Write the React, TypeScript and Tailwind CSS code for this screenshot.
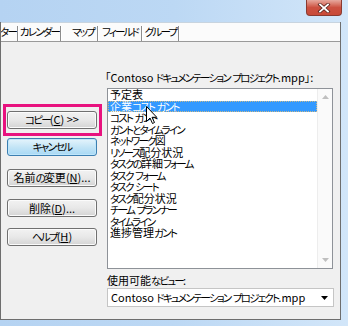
import React from "react";

const items = [
  "予定表",
  "企業コスト ガント",
  "コスト ガント",
  "ガントとタイムライン",
  "ネットワーク図",
  "リソース配分状況",
  "タスクの詳細フォーム",
  "タスク フォーム",
  "タスク シート",
  "タスク配分状況",
  "チーム プランナー",
  "タイムライン",
  "進捗管理ガント",
];

// Wraps kana runs in a tighter span (Meiryo UI kana are narrow)
function J({ t }: { t: string }) {
  const parts = t.split(/([\u3040-\u30ff]+)/);
  return (
    <>
      {parts.map((p, i) =>
        /[\u3040-\u30ff]/.test(p) ? (
          <span key={i} className="text-[10.5px] tracking-[-1.8px]">
            {p}
          </span>
        ) : (
          <span key={i}>{p}</span>
        )
      )}
    </>
  );
}

function Btn({ children, mt, primary }: { children: React.ReactNode; mt: string; primary?: boolean }) {
  return (
    <div
      className={
        mt +
        " w-[90px] h-[18px] rounded-[3px] border flex items-center justify-center text-[11px] leading-none text-black " +
        (primary
          ? "border-[#3c7fb1] bg-gradient-to-b from-[#e5f4fc] via-[#c4e5f6] to-[#a7d9f5] shadow-[inset_0_0_0_1px_#bfe6fb]"
          : "border-[#707070] bg-gradient-to-b from-[#f2f2f2] via-[#e8e8e8] to-[#d4d4d4] shadow-[inset_0_0_0_1px_#fbfbfb]")
      }
    >
      {children}
    </div>
  );
}

function Sep() {
  return <div className="w-[2px] h-[15px] shrink-0 self-end border-l border-[#8c8c8c] border-r border-r-white" />;
}

export default function App() {
  return (
    <div className="relative w-[348px] h-[326px] overflow-hidden bg-gradient-to-r from-[#b5d3f2] via-[#bcd8f4] to-[#d2e6f9] font-['Noto_Sans_CJK_JP','Noto_Sans',sans-serif] [font-feature-settings:'palt'] text-black">
      {/* title bar spacer */}
      <div className="h-[22px]" />
      {/* close button */}
      <div className="absolute left-[306px] top-0 w-[36px] h-[16px] rounded-b-[4px] border border-t-0 border-[#8a3a30] bg-gradient-to-b from-[#e6a89e] via-[#cc5040] to-[#c84a38] flex items-center justify-center">
        <svg width="14" height="10" viewBox="0 0 14 10">
          <path d="M3 1.5 L11 8.5 M11 1.5 L3 8.5" stroke="#5a2620" strokeWidth="3.4" strokeLinecap="square" />
          <path d="M3 1.5 L11 8.5 M11 1.5 L3 8.5" stroke="#ffffff" strokeWidth="1.8" strokeLinecap="square" />
        </svg>
      </div>

      {/* window panel */}
      <div className="w-[341px] h-[298px] border-l border-r border-b border-[#6e6e6e] bg-[#f0f0f0] flex flex-col">
        {/* tab strip */}
        <div className="h-[20px] shrink-0 border-t border-[#c8d4df] border-b border-b-[#9a9a9a] bg-[#fbfbfb] flex items-stretch text-[11px] leading-none">
          <div className="w-[16px] shrink-0 flex items-center justify-end overflow-hidden whitespace-nowrap pr-[1px]">
            <J t="ター" />
          </div>
          <Sep />
          <div className="w-[41px] shrink-0 flex items-center justify-center whitespace-nowrap">
            <J t="カレンダー" />
          </div>
          <Sep />
          <div className="w-[35px] shrink-0 flex items-center justify-center whitespace-nowrap pl-[7px]">
            <J t="マップ" />
          </div>
          <Sep />
          <div className="w-[42px] shrink-0 flex items-center justify-center whitespace-nowrap">
            <J t="フィールド" />
          </div>
          <Sep />
          <div className="w-[35px] shrink-0 flex items-center justify-center whitespace-nowrap">
            <J t="グループ" />
          </div>
          <Sep />
          <div className="flex-1" />
        </div>

        {/* body */}
        <div className="flex-1 flex min-h-0">
          {/* left buttons */}
          <div className="w-[103px] shrink-0 pl-[6px] flex flex-col">
            <Btn mt="mt-[69px]">
              <span>
                <J t="コピー" />(<span className="underline">C</span>) &gt;&gt;
              </span>
            </Btn>
            <Btn mt="mt-[9px]" primary>
              <J t="キャンセル" />
            </Btn>
            <Btn mt="mt-[13px]">
              <span>
                <J t="名前の変更" />(<span className="underline">N</span>)...
              </span>
            </Btn>
            <Btn mt="mt-[12px]">
              <span>
                削除(<span className="underline">D</span>)...
              </span>
            </Btn>
            <Btn mt="mt-[11px]">
              <span>
                <J t="ヘルプ" />(<span className="underline">H</span>)
              </span>
            </Btn>
          </div>

          {/* right column */}
          <div className="flex-1 min-w-0 flex flex-col">
            <div className="mt-[28px] ml-[1px] h-[14px] leading-[14px] text-[11px] whitespace-nowrap">
              <J t="「Contoso ドキュメンテーション プロジェクト.mpp」:" />
            </div>
            <div className="mt-[4px] ml-[3px] w-[226px] h-[181px] border border-[#8e9298] bg-white flex">
              <div className="flex-1 flex flex-col text-[11px]">
                {items.map((t, i) => (
                  <div
                    key={t}
                    className={
                      i === 1
                        ? "h-[11.5px] leading-[11.5px] pl-[2px] whitespace-nowrap bg-[#3399ff] text-white outline outline-1 outline-dotted outline-offset-[-1px] outline-[#c8b88a]"
                        : "h-[11.5px] leading-[11.5px] pl-[2px] whitespace-nowrap"
                    }
                  >
                    <J t={t} />
                  </div>
                ))}
              </div>
              <div className="w-[15px] border-l border-[#ededed] bg-[#fafafa] flex flex-col justify-between pb-[1px]">
                <div className="h-[15px] flex items-center justify-center">
                  <svg width="7" height="4" viewBox="0 0 7 4">
                    <path d="M0 4 L3.5 0 L7 4 Z" fill="#bfbfbf" />
                  </svg>
                </div>
                <div className="h-[15px] flex items-center justify-center">
                  <svg width="7" height="4" viewBox="0 0 7 4">
                    <path d="M0 0 L3.5 4 L7 0 Z" fill="#bfbfbf" />
                  </svg>
                </div>
              </div>
            </div>
            <div className="mt-[4px] ml-[3px] h-[14px] leading-[14px] text-[11px] whitespace-nowrap">
              <J t="使用可能なビュー:" />
            </div>
            <div className="mt-[1px] ml-[3px] w-[227px] h-[19px] border border-[#c5c5c5] bg-white flex items-center text-[11px] pl-[3px]">
              <span className="flex-1 min-w-0 overflow-hidden whitespace-nowrap">
                <J t="Contoso ドキュメンテーション プロジェクト.mpp" />
              </span>
              <svg width="7" height="4" viewBox="0 0 7 4" className="mr-[5px] shrink-0">
                <path d="M0 0 L3.5 4 L7 0 Z" fill="#000" />
              </svg>
            </div>
          </div>
        </div>
      </div>

      {/* magenta highlight */}
      <div className="absolute left-[3px] top-[104px] w-[99px] h-[32px] border-[3px] border-[#e8127f]" />

      {/* mouse cursor */}
      <svg className="absolute left-[146px] top-[106px]" width="12" height="19" viewBox="0 0 12 19">
        <path d="M0.5 0.5 L0.5 15.5 L4 12 L6.5 17.5 L8.5 16.5 L6 11.3 L10.8 11.3 Z" fill="#fff" stroke="#000" strokeWidth="1" strokeLinejoin="miter" />
      </svg>
    </div>
  );
}
